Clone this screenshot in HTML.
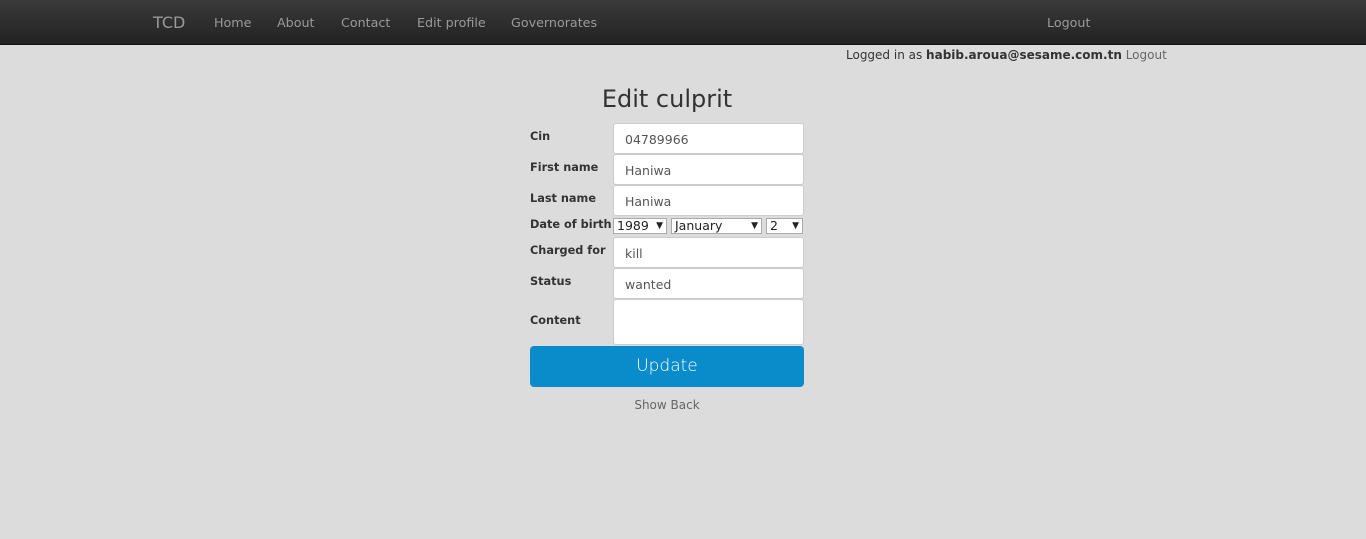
<!DOCTYPE html>
<html><head><meta charset="utf-8"><style>
*{margin:0;padding:0;box-sizing:border-box}
body{width:1366px;height:539px;background:#dcdcdc;font-family:"DejaVu Sans","Liberation Sans",sans-serif;position:relative;overflow:hidden;color:#333}
.nav{position:absolute;left:0;top:0;width:1366px;height:45px;background:linear-gradient(#3a3a3a,#222);border-bottom:1px solid #111}
.nav span{position:absolute;top:15px;font-size:12.7px;color:#9a9a9a}
.brand{font-size:16px!important;top:13px!important;color:#999!important}
.lg{position:absolute;left:846px;top:48px;font-size:12px;color:#333}
.lg a{color:#666}
h1{position:absolute;left:0;width:1334px;text-align:center;top:85px;font-weight:normal;font-size:24px;color:#333}
.l{position:absolute;left:530px;font-size:11.3px;font-weight:bold;color:#333;white-space:nowrap}
.i{position:absolute;left:613px;width:191px;height:31px;background:#fff;border:1px solid #ccc;border-radius:3px;font-size:12.5px;padding:8px 11px;color:#555}
.s{position:absolute;top:218px;height:16px;background:#fff;border:1px solid #aaa;font-size:12.5px;line-height:14px;padding-left:3px;color:#222}
.s b{position:absolute;right:3px;top:0;font-size:9px;font-weight:normal}
.btn{position:absolute;left:530px;top:346px;width:274px;height:41px;background:#0a8ccb;border-radius:4px;color:#fff;font-size:17px;font-weight:lighter;text-align:center;line-height:40px}
.sb{position:absolute;left:0;width:1334px;text-align:center;top:398px;font-size:12px;color:#666}
</style></head><body>
<div class="nav">
<span class="brand" style="left:153px">TCD</span>
<span style="left:214px">Home</span>
<span style="left:277px">About</span>
<span style="left:341px">Contact</span>
<span style="left:417px">Edit profile</span>
<span style="left:511px">Governorates</span>
<span style="left:1047px">Logout</span>
</div>
<div class="lg">Logged in as <b>habib.aroua@sesame.com.tn</b> <a>Logout</a></div>
<h1>Edit culprit</h1>
<div class="l" style="top:130px">Cin</div><div class="i" style="top:123px">04789966</div>
<div class="l" style="top:161px">First name</div><div class="i" style="top:154px">Haniwa</div>
<div class="l" style="top:192px">Last name</div><div class="i" style="top:185px">Haniwa</div>
<div class="l" style="top:218px">Date of birth</div>
<div class="s" style="left:613px;width:54px">1989<b>▼</b></div>
<div class="s" style="left:671px;width:91px">January<b>▼</b></div>
<div class="s" style="left:766px;width:37px">2<b>▼</b></div>
<div class="l" style="top:244px">Charged for</div><div class="i" style="top:237px">kill</div>
<div class="l" style="top:275px">Status</div><div class="i" style="top:268px">wanted</div>
<div class="l" style="top:314px">Content</div><div class="i" style="top:299px;height:46px"></div>
<div class="btn">Update</div>
<div class="sb">Show Back</div>
</body></html>
